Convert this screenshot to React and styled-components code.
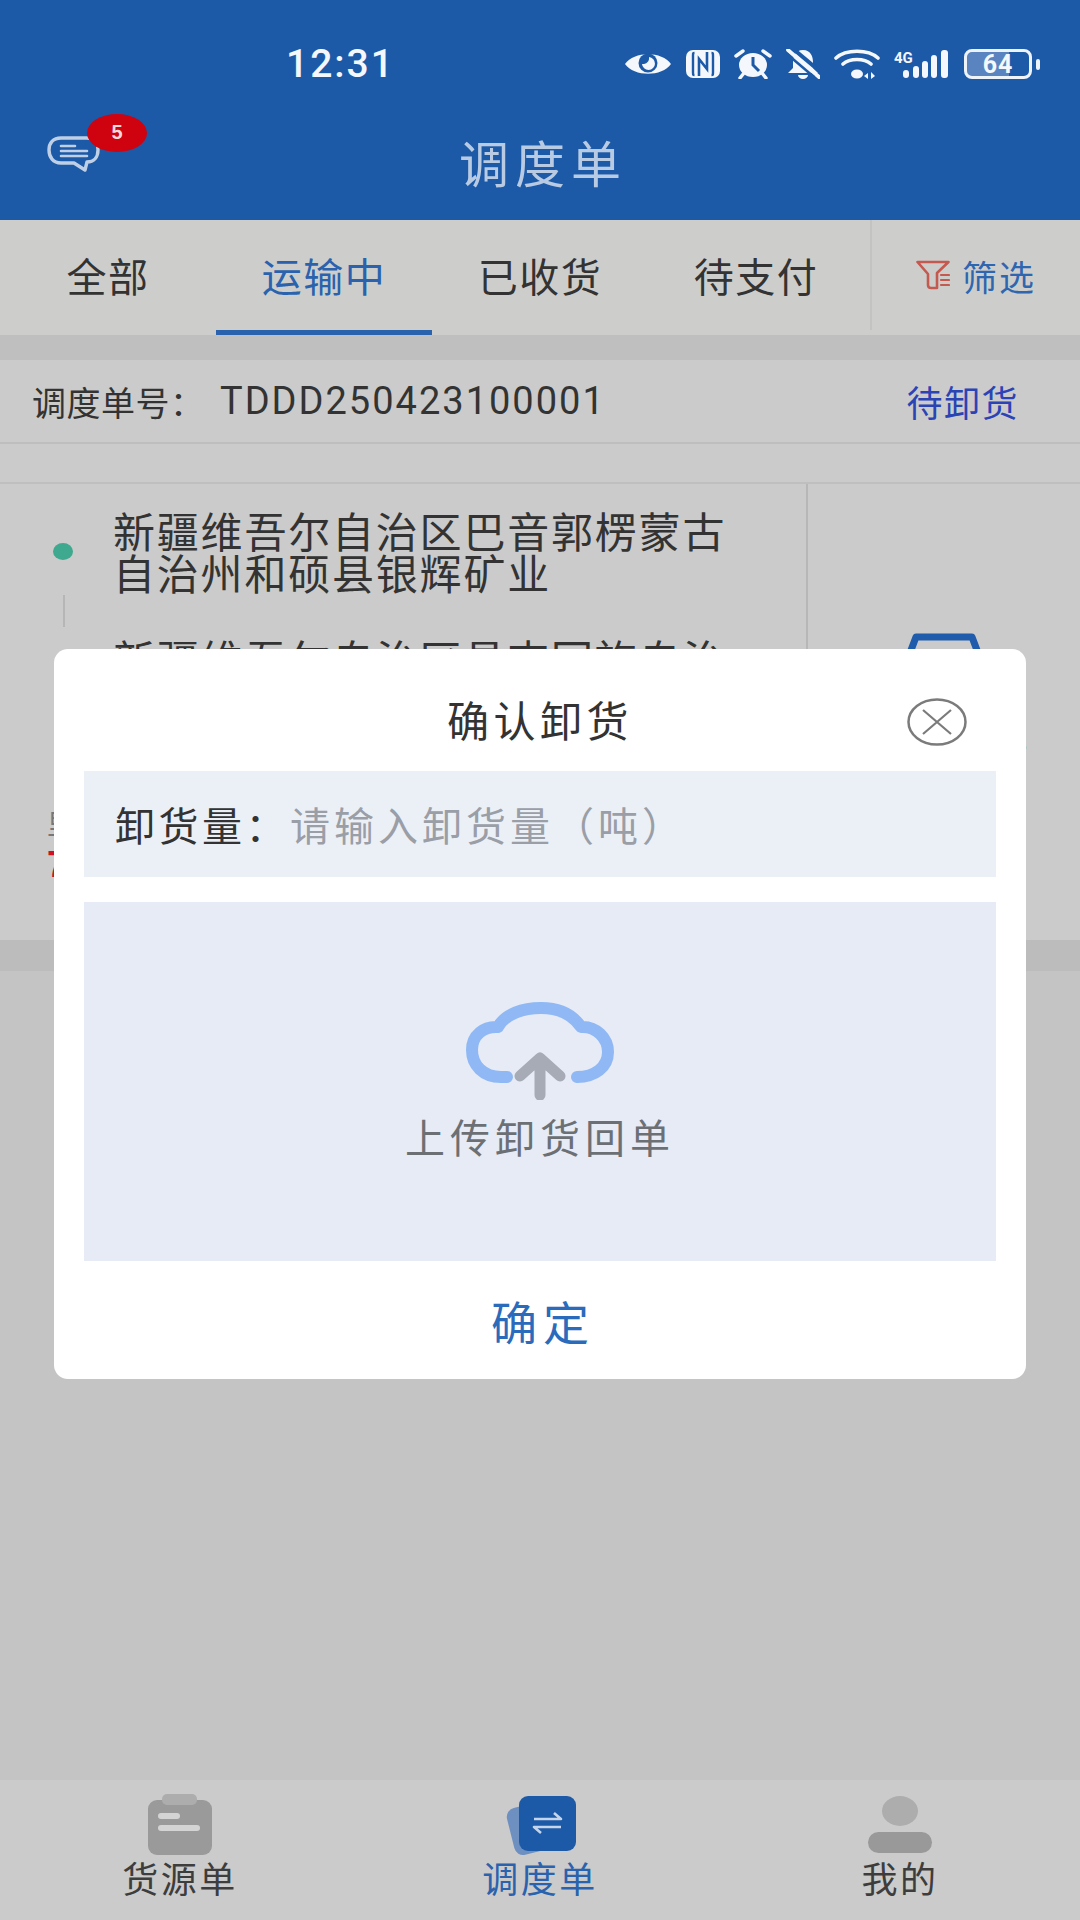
import React from "react";
import styled, { createGlobalStyle } from "styled-components";

const CJK = `"Noto Sans CJK SC", "Noto Sans", sans-serif`;

const Global = createGlobalStyle`
  html, body { margin: 0; padding: 0; background: #c4c4c4; }
  * { box-sizing: border-box; }
  body { font-family: ${CJK}; }
`;

const Page = styled.div`
  position: relative;
  width: 1080px;
  height: 1920px;
  overflow: hidden;
  display: flex;
  flex-direction: column;
  background: #c4c4c4;
`;

const Header = styled.header`
  height: 220px;
  background: #1c5aa8;
  display: flex;
  flex-direction: column;
  flex: none;
`;

const StatusBar = styled.div`
  height: 125px;
  padding: 44px 40px 0 286px;
  display: flex;
  align-items: flex-start;
  justify-content: space-between;
`;

const Time = styled.div`
  font-family: Roboto, sans-serif;
  font-size: 39px;
  line-height: 40px;
  font-weight: 500;
  letter-spacing: 2px;
  color: #f4f7fb;
`;

const StatusIcons = styled.div`
  display: flex;
  align-items: center;
  gap: 14px;
  height: 40px;
`;

const Battery = styled.div`
  width: 68px;
  height: 30px;
  border: 3px solid #eef3fa;
  border-radius: 8px;
  display: flex;
  align-items: center;
  justify-content: center;
  overflow: hidden;
  font-family: Roboto, sans-serif;
  font-weight: 700;
  font-size: 25px;
  letter-spacing: 1px;
  color: #f4f7fb;
  background: linear-gradient(90deg, #5a84bf 0 68%, transparent 68%);
`;

const BatteryWrap = styled.div`
  display: flex;
  align-items: center;
  gap: 4px;
  margin-left: 2px;
`;

const BatteryNub = styled.div`
  width: 4px;
  height: 11px;
  border-radius: 2px;
  background: #eef3fa;
`;

const NavRow = styled.div`
  flex: 1;
  display: grid;
  grid-template-columns: 1fr auto 1fr;
  align-items: center;
  padding-bottom: 23px;
`;

const ChatButton = styled.div`
  position: relative;
  width: 53px;
  height: 37px;
  margin: 0 0 14px 47px;
`;

const Badge = styled.div`
  position: absolute;
  left: 40px;
  top: -22px;
  width: 60px;
  height: 38px;
  border-radius: 50%;
  background: #cf0210;
  color: #f6d9d9;
  font-family: "Liberation Sans", sans-serif;
  font-weight: 700;
  font-size: 20px;
  display: flex;
  align-items: center;
  justify-content: center;
`;

const Title = styled.h1`
  margin: 0;
  font-size: 50px;
  line-height: 60px;
  font-weight: 400;
  letter-spacing: 6px;
  margin-right: -6px;
  color: #b9cbe3;
`;

const Tabs = styled.nav`
  height: 115px;
  flex: none;
  display: flex;
  background: #cdcecc;
`;

const Tab = styled.div`
  width: 216px;
  height: 115px;
  display: flex;
  align-items: center;
  justify-content: center;
  font-size: 40px;
  letter-spacing: 1.5px;
  color: ${(p) => (p.$active ? "#2a62ad" : "#333333")};
  border-bottom: 5px solid ${(p) => (p.$active ? "#2a62ad" : "transparent")};
`;

const FilterTab = styled.div`
  margin-left: 6px;
  flex: 1;
  height: 110px;
  border-left: 2px solid #c3c4c2;
  padding-left: 44px;
  display: flex;
  align-items: center;
  gap: 12px;
  font-size: 35px;
  letter-spacing: 2px;
  color: #2e66b0;
`;

const Band = styled.div`
  height: ${(p) => p.$h}px;
  flex: none;
  background: ${(p) => p.$bg};
`;

const OrderRow = styled.div`
  height: 84px;
  flex: none;
  display: flex;
  align-items: center;
  padding: 0 62px 0 32px;
  background: #cbcbcb;
  border-bottom: 2px solid #bebebe;
  color: #333;
  font-size: 34px;
`;

const OrderLabel = styled.span`
  width: 188px;
  letter-spacing: 0.5px;
`;

const OrderNumber = styled.span`
  font-family: Roboto, sans-serif;
  font-size: 38px;
  letter-spacing: 2px;
  flex: 1;
`;

const OrderStatus = styled.span`
  font-size: 36px;
  letter-spacing: 1.5px;
  margin-right: -1px;
  color: #2a43b5;
`;

const Gap = styled.div`
  height: 40px;
  flex: none;
  background: #cbcbcb;
  border-bottom: 2px solid #bfbfbf;
`;

const Card = styled.section`
  height: 456px;
  flex: none;
  display: flex;
  background: #cbcbcb;
`;

const CardMain = styled.div`
  width: 808px;
  padding-top: 25px;
  border-right: 2px solid #b7b7b7;
  display: flex;
  flex-direction: column;
`;

const Route = styled.div`
  display: grid;
  grid-template-columns: 113px 1fr;
  align-items: center;
  margin-bottom: ${(p) => p.$mb || 0}px;
`;

const RouteMark = styled.div`
  display: flex;
  justify-content: center;
  width: 20px;
  margin-left: 53px;
`;

const Dot = styled.div`
  width: 20px;
  height: 17px;
  border-radius: 50%;
  background: #3fa98f;
`;

const Address = styled.div`
  font-size: 42px;
  line-height: 42px;
  letter-spacing: 1.8px;
  color: #333;
  width: 640px;
`;

const Connector = styled.div`
  width: 2px;
  height: 32px;
  margin: 0 0 10px 63px;
  background: #b6b6b6;
`;

const Meta = styled.div`
  margin: 86px 0 0 47px;
  font-size: 28px;
  line-height: 32px;
  color: #777;
`;

const Price = styled.div`
  margin: 8px 0 0 47px;
  font-family: "Liberation Sans", sans-serif;
  font-size: 36px;
  line-height: 36px;
  font-weight: 700;
  color: #d30f26;
`;

const CardSide = styled.div`
  flex: 1;
  padding-top: 148px;
  display: flex;
  flex-direction: column;
  align-items: center;
  gap: 36px;
`;

const SideLabel = styled.div`
  font-size: 38px;
  line-height: 52px;
  letter-spacing: 8px;
  color: #2060b0;
`;

const TabBar = styled.nav`
  margin-top: auto;
  height: 140px;
  flex: none;
  display: grid;
  grid-template-columns: repeat(3, 1fr);
  background: #cbcbcb;
`;

const NavItem = styled.div`
  display: flex;
  flex-direction: column;
  align-items: center;
  padding-top: 14px;
  font-size: 36px;
  line-height: 40px;
  letter-spacing: 2.5px;
  color: ${(p) => (p.$active ? "#2a62ad" : "#3d3d3d")};
`;

const NavIcon = styled.svg`
  display: block;
  width: 80px;
  height: 66px;
  margin-bottom: -3px;
`;

const Overlay = styled.div`
  position: absolute;
  inset: 0;
  padding: 649px 54px 0;
`;

const Modal = styled.div`
  height: 730px;
  background: #fff;
  border-radius: 14px;
  padding: 0 30px;
  display: flex;
  flex-direction: column;
`;

const ModalHead = styled.div`
  position: relative;
  height: 122px;
  flex: none;
  padding-top: 17px;
  display: flex;
  align-items: center;
  justify-content: center;
  font-size: 42px;
  letter-spacing: 4.5px;
  color: #333;
`;

const Close = styled.svg`
  position: absolute;
  left: 823px;
  top: 49px;
  width: 60px;
  height: 48px;
`;

const InputRow = styled.div`
  height: 106px;
  flex: none;
  background: #ebf0f7;
  display: flex;
  align-items: center;
  padding-left: 31px;
  font-size: 40px;
  letter-spacing: 3.5px;
  color: #333;
`;

const InputLabel = styled.span`
  width: 175px;
  flex: none;
`;

const Placeholder = styled.span`
  color: #9a9ea6;
  letter-spacing: 4px;
`;

const Upload = styled.div`
  margin-top: 25px;
  height: 359px;
  flex: none;
  background: #e6ebf5;
  display: flex;
  flex-direction: column;
  align-items: center;
  padding-top: 100px;
  font-size: 40px;
  line-height: 44px;
  letter-spacing: 5px;
  color: #6c7075;
`;

const CloudIcon = styled.svg`
  display: block;
  width: 150px;
  height: 98px;
  margin-bottom: 14px;
`;

const Confirm = styled.div`
  flex: 1;
  display: flex;
  align-items: center;
  justify-content: center;
  font-size: 46px;
  letter-spacing: 6px;
  margin-right: -6px;
  color: #2a6bbb;
`;

const W = "#f4f7fb";
const B = "#1c5aa8";

const StatusSet = () => (
  <StatusIcons>
    <svg width="48" height="26" viewBox="0 0 48 26">
      <path d="M1 13 C10 0 38 0 47 13 C38 26 10 26 1 13Z" fill={W} />
      <circle cx="24" cy="12" r="9.5" fill={B} />
      <path d="M25 6a6.5 6.5 0 1 1-7 7 6 6 0 0 0 7-7Z" fill={W} />
    </svg>
    <svg width="34" height="28" viewBox="0 0 34 28">
      <rect width="34" height="28" rx="7" fill={W} />
      <path d="M8.5 3C7 3 7 3 7 6V22C7 25 7 25 8.5 25M25.5 3C27 3 27 3 27 6V22C27 25 27 25 25.5 25" fill="none" stroke={B} strokeWidth="2.4" />
      <path d="M13 26V9L21 19V2" fill="none" stroke={B} strokeWidth="2.6" />
    </svg>
    <svg width="38" height="30" viewBox="0 0 38 30">
      <ellipse cx="19" cy="16" rx="14" ry="12" fill={W} />
      <path d="M19 8V16L25 22" fill="none" stroke={B} strokeWidth="3" />
      <path d="M2 7L9 2M36 7L29 2M6 29L10 24M32 29L28 24" stroke={W} strokeWidth="3.4" strokeLinecap="round" />
    </svg>
    <svg width="34" height="30" viewBox="0 0 34 30">
      <path d="M17 1C9 1 7 8 7 13V19L2 24H32L27 19V13C27 8 25 1 17 1Z" fill={W} />
      <path d="M12 26a5 4 0 0 0 10 0Z" fill={W} />
      <path d="M6 -1L36 24" stroke={B} strokeWidth="4" />
      <path d="M2 1L33 28" stroke={W} strokeWidth="3.8" strokeLinecap="round" />
      <path d="M1 5L28 28" stroke={B} strokeWidth="2.5" />
    </svg>
    <svg width="46" height="30" viewBox="0 0 46 30">
      <path d="M2 9C12 0 34 0 44 9M9 15C16 9 30 9 37 15" fill="none" stroke={W} strokeWidth="3.6" strokeLinecap="round" />
      <ellipse cx="23" cy="25" rx="6" ry="4.5" fill={W} />
      <path d="M34 24L30 27L34 30ZM37 23L41 27L37 30Z" fill={W} />
    </svg>
    <svg width="54" height="30" viewBox="0 0 54 30" overflow="visible">
      <text x="0" y="14" fontFamily="Roboto, sans-serif" fontWeight="700" fontSize="15" fill={W}>4G</text>
      <rect x="9" y="21" width="6" height="8" rx="3" fill={W} />
      <rect x="19" y="17" width="6" height="12" rx="3" fill={W} />
      <rect x="28" y="12" width="6" height="17" rx="3" fill={W} />
      <rect x="37" y="6" width="6" height="23" rx="3" fill={W} />
      <rect x="47" y="1" width="7" height="28" rx="3" fill={W} />
    </svg>
    <BatteryWrap>
      <Battery>64</Battery>
      <BatteryNub />
    </BatteryWrap>
  </StatusIcons>
);

const Bubble = () => (
  <svg width="53" height="37" viewBox="0 0 53 37" fill="none" stroke="#bfd0e6" strokeWidth="3.4" strokeLinecap="round" strokeLinejoin="round">
    <path d="M14 2H40C47 2 51 7 51 14C51 21 47 26 40 26H40L38 34L27 27H14C6 27 2 21 2 14C2 7 6 2 14 2Z" />
    <path d="M14 10H28M14 15H40M14 20H40" strokeWidth="2.6" />
  </svg>
);

const FilterIcon = () => (
  <svg width="34" height="30" viewBox="0 0 34 30" fill="none" stroke="#c4594f" strokeWidth="2.6" strokeLinejoin="round" strokeLinecap="round">
    <path d="M1.5 2H32.5L21 13V28H15C13 28 12 27 12 25V14Z" />
    <path d="M25 15H33M25 20H33M25 25H33" strokeWidth="2.2" />
  </svg>
);

const Truck = () => (
  <svg width="90" height="60" viewBox="0 0 90 60" fill="none" stroke="#1f5cab" strokeWidth="7" strokeLinejoin="round">
    <path d="M0 50L17 5H73L90 50" />
  </svg>
);

const DocIcon = () => (
  <NavIcon viewBox="0 0 80 66">
    <rect x="8" y="6" width="64" height="55" rx="9" fill="#9a9a9a" />
    <rect x="22" y="0" width="35" height="11" rx="5" fill="#adadad" />
    <rect x="18" y="19" width="22" height="6" rx="3" fill="#d4d4d4" />
    <rect x="18" y="31" width="42" height="6" rx="3" fill="#d4d4d4" />
  </NavIcon>
);

const SwapIcon = () => (
  <NavIcon viewBox="0 0 80 66">
    <rect x="10" y="10" width="46" height="48" rx="9" fill="#6d90c0" transform="rotate(-14 33 34)" />
    <rect x="19" y="2" width="57" height="55" rx="9" fill="#1c5aa8" />
    <path d="M34 25H61L54 19M61 33H34L41 39" fill="none" stroke="#c4d4ea" strokeWidth="2.6" strokeLinejoin="round" />
  </NavIcon>
);

const UserIcon = () => (
  <NavIcon viewBox="0 0 80 66">
    <ellipse cx="40" cy="17" rx="18" ry="15" fill="#adadad" />
    <rect x="8" y="38" width="64" height="21" rx="10.5" fill="#999999" />
  </NavIcon>
);

export default function App() {
  return (
    <Page>
      <Global />
      <Header>
        <StatusBar>
          <Time>12:31</Time>
          <StatusSet />
        </StatusBar>
        <NavRow>
          <ChatButton>
            <Bubble />
            <Badge>5</Badge>
          </ChatButton>
          <Title>调度单</Title>
        </NavRow>
      </Header>

      <Tabs>
        <Tab>全部</Tab>
        <Tab $active>运输中</Tab>
        <Tab>已收货</Tab>
        <Tab>待支付</Tab>
        <FilterTab>
          <FilterIcon />
          筛选
        </FilterTab>
      </Tabs>
      <Band $h={25} $bg="#bfbfbf" />

      <OrderRow>
        <OrderLabel>调度单号：</OrderLabel>
        <OrderNumber>TDDD250423100001</OrderNumber>
        <OrderStatus>待卸货</OrderStatus>
      </OrderRow>
      <Gap />

      <Card>
        <CardMain>
          <Route $mb={2}>
            <RouteMark>
              <Dot />
            </RouteMark>
            <Address>新疆维吾尔自治区巴音郭楞蒙古自治州和硕县银辉矿业</Address>
          </Route>
          <Connector />
          <Route>
            <span />
            <Address>新疆维吾尔自治区昌吉回族自治州昌吉市</Address>
          </Route>
          <Meta>里程</Meta>
          <Price>7</Price>
        </CardMain>
        <CardSide>
          <Truck />
          <SideLabel>确认卸货</SideLabel>
        </CardSide>
      </Card>
      <Band $h={31} $bg="#bcbcbc" />

      <TabBar>
        <NavItem>
          <DocIcon />
          货源单
        </NavItem>
        <NavItem $active>
          <SwapIcon />
          调度单
        </NavItem>
        <NavItem>
          <UserIcon />
          我的
        </NavItem>
      </TabBar>

      <Overlay>
        <Modal>
          <ModalHead>
            确认卸货
            <Close viewBox="0 0 60 48" fill="none" stroke="#7b7b7b" strokeWidth="2.5">
              <ellipse cx="30" cy="24" rx="28.5" ry="22.5" />
              <path d="M16 12L44 36M44 12L16 36" strokeWidth="2.2" />
            </Close>
          </ModalHead>
          <InputRow>
            <InputLabel>卸货量：</InputLabel>
            <Placeholder>请输入卸货量（吨）</Placeholder>
          </InputRow>
          <Upload>
            <CloudIcon viewBox="0 0 150 98" fill="none" strokeLinecap="round" strokeLinejoin="round">
              <path
                d="M42 75H36C18 75 7 63 7 48C7 33 19 24 33 25C40 12 58 6 76 6C94 6 108 13 116 25C131 24 143 36 143 50C143 65 130 75 112 75"
                stroke="#8fb8f5"
                strokeWidth="12"
              />
              <path d="M55 74L75 56L95 74M75 58V93" stroke="#a6abb5" strokeWidth="11" />
            </CloudIcon>
            上传卸货回单
          </Upload>
          <Confirm>确定</Confirm>
        </Modal>
      </Overlay>
    </Page>
  );
}
